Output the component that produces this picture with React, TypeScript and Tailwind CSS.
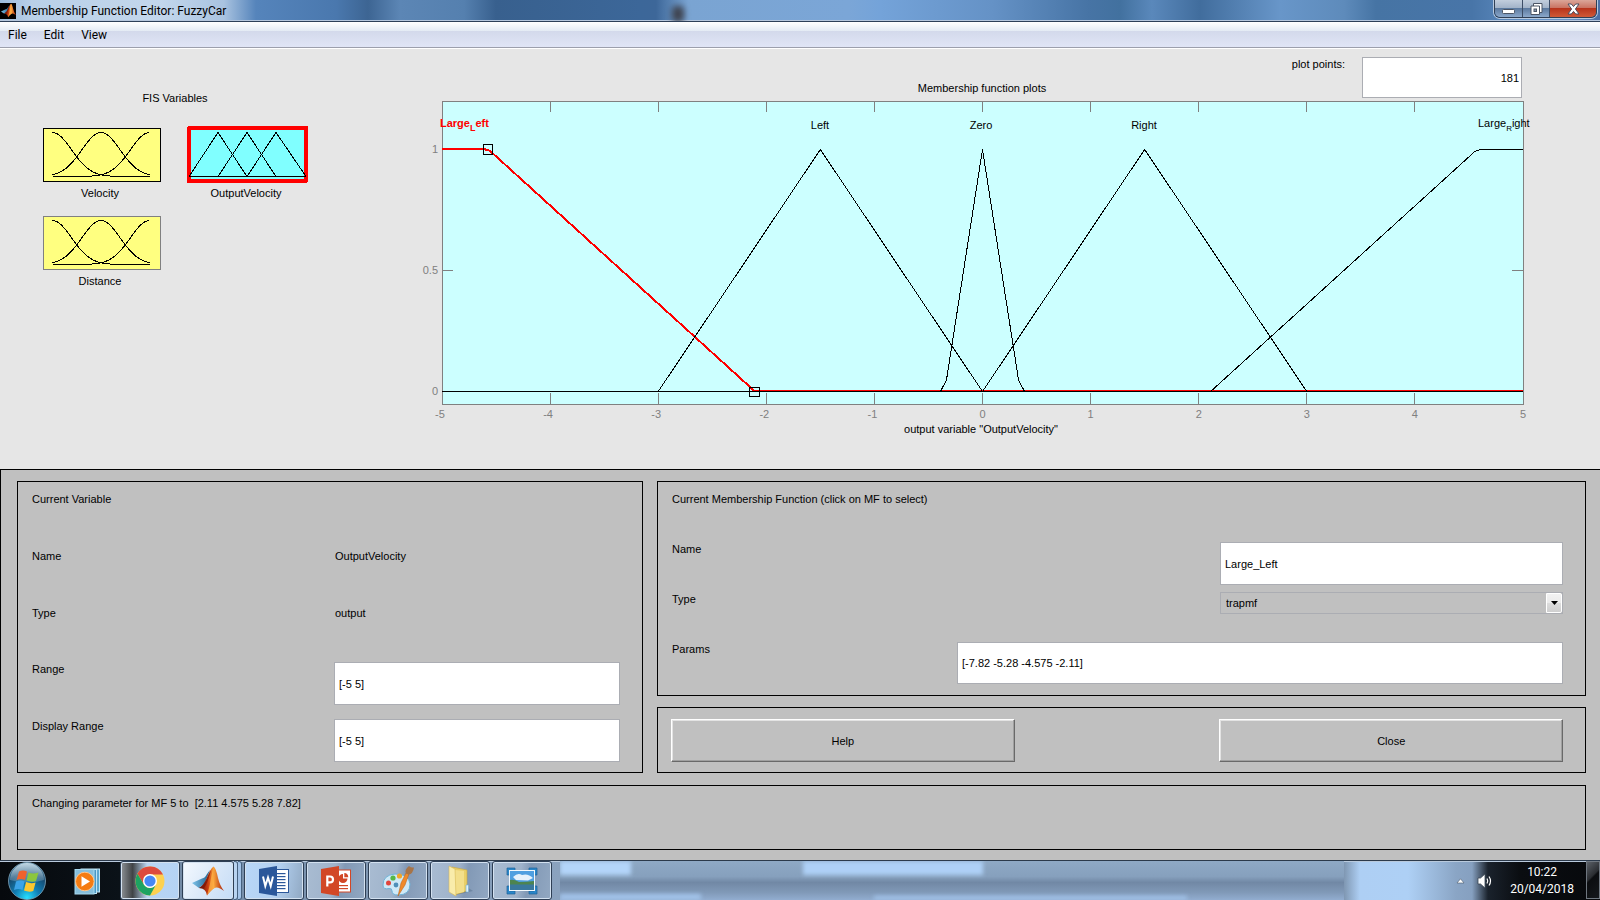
import React, { useId, useState } from "react";

type Point = [number, number];

const toPoints = (pts: Point[]) => pts.map(([x, y]) => `${x.toFixed(2)},${y.toFixed(2)}`).join(" ");

/* ---------- membership functions ---------- */

const trapmf = (x: number, a: number, b: number, c: number, d: number) => {
  if (x <= a || x >= d) return 0;
  if (x < b) return (x - a) / (b - a);
  if (x <= c) return 1;
  return (d - x) / (d - c);
};

const SAMPLES = 181;
const chartX = (v: number) => 982.5 + v * 108.1;
const chartY = (v: number) => 391.5 - v * 242;

const sampleMf = (a: number, b: number, c: number, d: number): Point[] =>
  Array.from({ length: SAMPLES }, (_, i) => {
    const v = -5 + (10 * i) / (SAMPLES - 1);
    return [chartX(v), chartY(trapmf(v, a, b, c, d))];
  });

const LARGE_LEFT = sampleMf(-7.82, -5.28, -4.575, -2.11).map(([x, y]): Point => [x, y - 0.5]);
const OTHERS = [
  sampleMf(-3, -1.5, -1.5, 0),
  sampleMf(-0.35, 0, 0, 0.35),
  sampleMf(0, 1.5, 1.5, 3),
  sampleMf(2.11, 4.575, 5.28, 7.82),
];

function MembershipChart() {
  const ticks = [-5, -4, -3, -2, -1, 0, 1, 2, 3, 4, 5];
  return (
    <svg viewBox="420 99 1124 341" className="block w-full overflow-visible text-[11px]" role="img" aria-label="Membership function plots">
      <rect x="442.5" y="101.5" width="1081" height="303" fill="#ccffff" stroke="#808080" shapeRendering="crispEdges" />
      <g stroke="#808080" shapeRendering="crispEdges">
        {ticks.slice(1, -1).map((t) => (
          <g key={t}>
            <line x1={Math.floor(chartX(t)) + 0.5} x2={Math.floor(chartX(t)) + 0.5} y1="102" y2="112" />
            <line x1={Math.floor(chartX(t)) + 0.5} x2={Math.floor(chartX(t)) + 0.5} y1="393" y2="404" />
          </g>
        ))}
        <line x1="443" x2="453" y1="270.5" y2="270.5" />
        <line x1="1512" x2="1523" y1="270.5" y2="270.5" />
      </g>
      <polyline points={toPoints(LARGE_LEFT)} fill="none" stroke="#ff0000" strokeWidth="2" shapeRendering="crispEdges" />
      <g fill="none" stroke="#000" shapeRendering="crispEdges">
        {OTHERS.map((pts, i) => (
          <polyline key={i} points={toPoints(pts)} />
        ))}
      </g>
      <g fill="none" stroke="#000" shapeRendering="crispEdges">
        <rect x="483.5" y="144.5" width="9" height="10" />
        <rect x="749.5" y="387.5" width="10" height="9" />
      </g>
      <g fill="#808080" textAnchor="middle">
        {ticks.map((t) => (
          <text key={t} x={chartX(t) - (t < 0 ? 2 : 0)} y="418">{t}</text>
        ))}
      </g>
      <g fill="#808080" textAnchor="end">
        <text x="438" y="153">1</text>
        <text x="438" y="274">0.5</text>
        <text x="438" y="395">0</text>
      </g>
      <g textAnchor="middle">
        <text x="820" y="129">Left</text>
        <text x="981" y="129">Zero</text>
        <text x="1144" y="129">Right</text>
        <text x="981" y="433">output variable "OutputVelocity"</text>
      </g>
      <text x="440" y="127" fill="#ff0000" fontWeight="bold">
        Large<tspan fontSize="9" dy="4">L</tspan><tspan dy="-4">eft</tspan>
      </text>
      <text x="1478" y="127">
        Large<tspan fontSize="8" dy="4">R</tspan><tspan dy="-4">ight</tspan>
      </text>
    </svg>
  );
}

/* ---------- FIS variable thumbnails ---------- */

const gauss = (center: number): Point[] =>
  Array.from({ length: 49 }, (_, i) => {
    const x = 9.5 + (97 * i) / 48;
    return [x, 48.5 - 44 * Math.exp(-((x - center) ** 2) / (2 * 19.1 ** 2))];
  });

function GaussThumb({ edge }: { edge: string }) {
  return (
    <svg width="118" height="54" viewBox="0 0 118 54" shapeRendering="crispEdges">
      <rect x="0.5" y="0.5" width="117" height="53" fill="#ffff80" stroke={edge} />
      {[9.5, 58, 106.5].map((c) => (
        <polyline key={c} points={toPoints(gauss(c))} fill="none" stroke="#000" />
      ))}
    </svg>
  );
}

function TriangleThumb() {
  return (
    <svg width="118" height="54" viewBox="0 0 118 54" shapeRendering="crispEdges" className="overflow-visible">
      <rect x="0" y="0" width="117" height="53" fill="#80ffff" stroke="#ff0000" strokeWidth="4" strokeLinejoin="round" />
      <g fill="none" stroke="#000">
        <polyline points="0,48.5 29,4.5 58,48.5" />
        <polyline points="29,48.5 58,4.5 87,48.5" />
        <polyline points="58,48.5 87,4.5 117,48.5" />
        <line x1="0" x2="117" y1="48.5" y2="48.5" />
      </g>
    </svg>
  );
}

function Variable({ name, children }: { name: string; children: React.ReactNode }) {
  return (
    <button type="button" className="flex flex-col items-center">
      {children}
      <span className="mt-[3px] pr-1 leading-4">{name}</span>
    </button>
  );
}

/* ---------- form parts ---------- */

const fieldClass = "w-full rounded-none border border-[#abadb3] bg-white px-1 text-black outline-none";

function Panel({ className = "", children }: { className?: string; children: React.ReactNode }) {
  return <section className={`border border-black ${className}`}>{children}</section>;
}

function Field({ label, value, rowClass, height }: { label: string; value: string; rowClass: string; height: string }) {
  const id = useId();
  const [text, setText] = useState(value);
  return (
    <div className={`grid items-start ${rowClass}`}>
      <label htmlFor={id} className="-mt-px leading-4">{label}</label>
      <input id={id} value={text} onChange={(e) => setText(e.target.value)} className={`${fieldClass} ${height}`} />
    </div>
  );
}

function PushButton({ children }: { children: React.ReactNode }) {
  return (
    <button type="button" className="h-[43px] border border-t-white border-r-[#696969] border-b-[#696969] border-l-white bg-[#c0c0c0] pt-px shadow-[inset_-1px_-1px_0_#a0a0a0,inset_1px_1px_0_#e3e3e3]">
      {children}
    </button>
  );
}

/* ---------- icons ---------- */

function MatlabLogo({ size }: { size: number }) {
  const id = useId();
  return (
    <svg width={size} height={size} viewBox="0 0 32 32">
      <defs>
        <linearGradient id={`${id}a`} x1="0" x2="1">
          <stop offset="0" stopColor="#7fc4ea" />
          <stop offset="1" stopColor="#1d5f8e" />
        </linearGradient>
        <linearGradient id={`${id}b`} x1="0" x2="1">
          <stop offset="0" stopColor="#5a1208" />
          <stop offset="0.35" stopColor="#c83b0e" />
          <stop offset="0.6" stopColor="#f7a13a" />
          <stop offset="1" stopColor="#a81c08" />
        </linearGradient>
      </defs>
      <path d="M0 18 L10 13.5 Q13 13 15 9 L18 5 L13 18 L7 23 Z" fill={`url(#${id}a)`} />
      <path d="M7 23 Q11 21 14 15 Q18 4 21.5 1.5 Q24 3 26 13 Q28 21 32 26 Q26 21 22.5 23 Q19 25 15 30.5 Q14 23 7 23 Z" fill={`url(#${id}b)`} />
      <path d="M21.5 1.5 Q19 12 18 19 Q16.5 25 15 30.5 Q19 25 22.5 23 Q21 10 21.5 1.5 Z" fill="#ffb347" opacity="0.75" />
      <path d="M7 23 Q11 21 14 15 L19 5 Q16 17 12 23.5 Z" fill="#7b1608" opacity="0.75" />
    </svg>
  );
}

function StartOrb() {
  return (
    <svg width="40" height="40" viewBox="0 0 40 40">
      <defs>
        <radialGradient id="orb" cx="0.5" cy="0.95" r="0.95">
          <stop offset="0" stopColor="#27e0ff" />
          <stop offset="0.35" stopColor="#117fb5" />
          <stop offset="0.7" stopColor="#164a70" />
          <stop offset="1" stopColor="#4d7f9f" />
        </radialGradient>
        <linearGradient id="orbGloss" x1="0" y1="0" x2="0" y2="1">
          <stop offset="0" stopColor="#e9f5fb" stopOpacity="0.75" />
          <stop offset="1" stopColor="#c6dce8" stopOpacity="0.2" />
        </linearGradient>
      </defs>
      <circle cx="20" cy="20" r="18.5" fill="url(#orb)" stroke="#8fb8cf" strokeOpacity="0.7" />
      <path d="M3 19 A17 17 0 0 1 37 19 Q20 24 3 19 Z" fill="url(#orbGloss)" />
      <path d="M12 10.5 Q16 8.5 20 10.5 L18 19 Q14 17 9.5 19 Z" fill="#f0622d" />
      <path d="M21.5 11.5 Q26 13.5 31.5 11.5 L29 20 Q25 21.5 19.5 19.5 Z" fill="#8cc63e" />
      <path d="M9 20.5 Q13.5 18.5 17.6 20.5 L15.5 29 Q11.5 27 7 29 Z" fill="#3ba3e8" />
      <path d="M19 21 Q24 23 28.6 21.5 L26.3 30 Q22 31.5 17 29.5 Z" fill="#fdc72f" />
    </svg>
  );
}

function MediaPlayerIcon() {
  return (
    <svg width="28" height="27" viewBox="0 0 28 27">
      <rect x="7" y="1" width="18.5" height="23" fill="#5ca7cf" stroke="#bfe4f5" />
      <rect x="4" y="1.5" width="18.5" height="24" fill="#4a98c4" stroke="#bfe4f5" />
      <rect x="1" y="1.5" width="19" height="24.5" fill="#86bfdc" stroke="#a8d9ef" />
      <circle cx="10.8" cy="13.5" r="9.3" fill="#f57c12" stroke="#ffc68c" />
      <path d="M7.5 8.3 L16 13.5 L7.5 18.7 Z" fill="#fff" />
    </svg>
  );
}

function ChromeIcon() {
  return (
    <svg width="30" height="30" viewBox="0 0 30 30">
      <circle cx="15" cy="15" r="14.5" fill="#fdd150" />
      <path d="M2.45 7.75 A14.5 14.5 0 0 1 28 8.6 L15 8.6 Q10 9 8.7 12 L8.9 18.5 Z" fill="#dd4b3e" />
      <path d="M2.45 7.75 L8.9 18.5 Q11.5 22.2 15.8 22 L20.5 19.5 L15 29.5 A14.5 14.5 0 0 1 2.45 7.75 Z" fill="#1da362" />
      <circle cx="15" cy="15" r="7" fill="#fff" />
      <circle cx="15" cy="15" r="5.6" fill="#4688f4" />
    </svg>
  );
}

function WordIcon() {
  return (
    <svg width="30" height="30" viewBox="0 0 30 30">
      <rect x="16" y="3.5" width="13.5" height="23" fill="#fff" stroke="#2b579a" />
      {[7, 10, 13, 16, 19, 22].map((y) => (
        <rect key={y} x="18" y={y} width="8.5" height="1.2" fill="#2b579a" />
      ))}
      <path d="M0 3 L18 0 V30 L0 27 Z" fill="#2b579a" />
      <path d="M4 10.5 L6.3 20 L9 11.5 L11.7 20 L14 10.5" fill="none" stroke="#fff" strokeWidth="2" />
    </svg>
  );
}

function PowerPointIcon() {
  return (
    <svg width="30" height="30" viewBox="0 0 30 30">
      <rect x="16" y="4" width="13.5" height="22" fill="#fff" stroke="#d24726" />
      <path d="M22 8 A4.5 4.5 0 1 0 26.5 12.5 H22 Z" fill="#d24726" />
      <path d="M23.3 7 A4.3 4.3 0 0 1 27.3 11.2 H23.3 Z" fill="#d24726" />
      <rect x="18" y="19" width="9" height="1.2" fill="#d24726" />
      <rect x="18" y="22" width="9" height="1.2" fill="#d24726" />
      <path d="M0 3 L18 0 V30 L0 27 Z" fill="#d24726" />
      <path d="M6.3 20.5 V10.5 H9 Q12 10.5 12 13.4 Q12 16.4 9 16.4 H6.3" fill="none" stroke="#fff" strokeWidth="2.2" />
    </svg>
  );
}

function PaintIcon() {
  return (
    <svg width="34" height="32" viewBox="0 0 34 32">
      <path d="M2 20 Q2 10 14 9 Q28 9 29 19 Q29 30 17 30 Q11 30 11 26 Q11 23 8 23.5 Q2 25 2 20 Z" fill="#cfe9f7" stroke="#6fb3d8" />
      <circle cx="7.5" cy="18" r="2.5" fill="#e2453c" />
      <circle cx="12" cy="13" r="2.6" fill="#56b847" />
      <circle cx="18.5" cy="11" r="2.6" fill="#f2a62a" />
      <circle cx="15" cy="20" r="2.4" fill="#4f8fb8" />
      <path d="M17 31 L20 18 L25 8 L28 9 L24 20 Z" fill="#ef8a2b" stroke="#b85f14" strokeWidth="0.5" />
      <path d="M25 8.5 Q23 5 28 1 Q30 3 33 2.5 Q32 9 27.5 9.5 Z" fill="#a77448" />
    </svg>
  );
}

function FolderIcon() {
  return (
    <svg width="28" height="32" viewBox="0 0 28 32">
      <path d="M10 30 L27 26 L21 22 Z" fill="#3d566f" opacity="0.3" />
      <path d="M6 2 L21 5 V26 L8 30 Z" fill="#e9cf68" stroke="#c8a53f" strokeWidth="0.6" />
      <path d="M9 5 L18 6 V27 L9 29 Z" fill="#f3df8b" />
      <path d="M3 1 L9 4 L10 31 L3 27 Z" fill="#f9ecab" stroke="#d8bb58" strokeWidth="0.6" />
      <path d="M20 20 H22.5 V27 H20 Z" fill="#dff1fb" stroke="#74aed3" strokeWidth="0.6" />
    </svg>
  );
}

function PictureIcon() {
  return (
    <svg width="32" height="28" viewBox="0 0 32 28">
      <path d="M1 8 V1 H9 V4 H4 V8 Z M23 1 H31 V8 H28 V4 H23 Z M1 19 V27 H9 V24 H4 V19 Z M31 19 V27 H23 V24 H28 V19 Z" fill="#2b86c8" stroke="#1d6299" strokeWidth="0.7" />
      <rect x="3.5" y="3.5" width="25" height="20" fill="#4f9fe0" stroke="#f2f8fc" />
      <path d="M7 10 Q12 5 16 8 Q22 6 27 11 L22 13.5 L10 13 Z" fill="#fff" opacity="0.85" />
      <path d="M4 13 Q8 12 13 15 Q20 15 28 14 V18 H4 Z" fill="#4d8450" />
      <rect x="4" y="17.5" width="24" height="5.5" fill="#3a789d" />
    </svg>
  );
}

/* ---------- window chrome ---------- */

function TitleBar() {
  return (
    <header className="relative flex h-[22px] items-start justify-between overflow-hidden border-b border-[#2d3f58] bg-[linear-gradient(90deg,#9cbcdc_0%,#b9d0e8_2%,#c3d7ec_10%,#a9c3e0_14%,#5584bb_16%,#4a78ae_21%,#3d6593_23%,#5c86b5_25%,#5580af_29%,#38608e_31%,#3c6799_40%,#3d6799_41%,#7aa4d2_43%,#7ba6d7_53%,#74a3d9_55%,#6592c6_62%,#4774a5_68%,#42719f_70%,#5a88bb_72%,#416d9d_75%,#6896c9_80%,#5e8bbb_84%,#4674a4_86%,#4875a8_92%,#6593c8_96%,#6793c8_98%,#4b6fa5_100%)] shadow-[inset_0_-1px_0_#b5c6dc]">
      <div className="flex h-full items-center gap-[5px]">
        <span className="flex size-4 items-center justify-center bg-black"><MatlabLogo size={15} /></span>
        <h1 className="font-['Roboto',sans-serif] text-[12px] leading-5 text-black">Membership Function Editor: FuzzyCar</h1>
      </div>
      <span aria-hidden="true" className="absolute top-1.5 left-[42%] h-4 w-3 rounded bg-[#3f4450] blur-[3px]" />
      <div className="absolute top-0 right-[3px] flex h-[18px] overflow-hidden rounded-b-md border border-t-0 border-[#2f3f55] shadow-[0_0_0_1px_#b8cae0]">
        <button type="button" aria-label="Minimize" className="flex w-[28px] items-center justify-center border-r border-[#3c4d66] bg-[linear-gradient(#c2cedd_0%,#a3b4c9_45%,#5c7a9f_50%,#8ba8cb_100%)]">
          <svg width="13" height="16" viewBox="0 0 13 16"><rect x="0.5" y="8.5" width="12" height="4" rx="1" fill="#fff" stroke="#4b5565" /></svg>
        </button>
        <button type="button" aria-label="Restore" className="flex w-[27px] items-center justify-center border-r border-[#3c4d66] bg-[linear-gradient(#c2cedd_0%,#a3b4c9_45%,#5c7a9f_50%,#8ba8cb_100%)]">
          <svg width="13" height="14" viewBox="0 0 13 14" fill="#fff" stroke="#4b5565">
            <path d="M3.5 1.5 H12 V10.5 H3.5 Z" />
            <path d="M1 4 H9.5 V12.5 H1 Z" />
            <rect x="4" y="7" width="2.5" height="2.5" fill="#8c9cb0" />
          </svg>
        </button>
        <button type="button" aria-label="Close window" className="flex w-[46px] items-center justify-center bg-[linear-gradient(#dba699_0%,#ca7463_45%,#b8341c_50%,#cf5a38_100%)]">
          <svg width="13" height="12" viewBox="0 0 13 12"><path d="M1 1 H4.3 L6.5 3.6 L8.7 1 H12 L8.4 6 L12 11 H8.7 L6.5 8.4 L4.3 11 H1 L4.6 6 Z" fill="#fff" stroke="#4b4f60" /></svg>
        </button>
      </div>
    </header>
  );
}

function MenuBar() {
  return (
    <nav className="flex h-[27px] items-center gap-[17px] border-b border-white bg-[linear-gradient(#ffffff_0px,#e3eaf4_9px,#d3d9eb_9px,#e0e5f6_25px,#9c9fac_25px,#9c9fac_26px)] px-2 font-['Roboto',sans-serif] text-[12px] leading-4">
      {["File", "Edit", "View"].map((m) => (
        <button type="button" key={m}>{m}</button>
      ))}
    </nav>
  );
}

/* ---------- taskbar ---------- */

function TaskButton({ label, tone, width = "w-[60px]", children }: { label: string; tone: string; width?: string; children: React.ReactNode }) {
  return (
    <button type="button" aria-label={label} className={`flex h-[39px] ${width} items-center justify-center rounded-[3px] border border-[#2e3f55] shadow-[inset_0_0_0_1px_#d3e1f0] ${tone}`}>
      {children}
    </button>
  );
}

const GLASS = "bg-[linear-gradient(100deg,#a9bcd2_0%,#9fb3cb_45%,#8299b6_60%,#92a8c2_100%)]";

function Taskbar() {
  return (
    <footer className="relative flex h-10 shrink-0 items-start overflow-hidden border-t border-[#2c3a4b] bg-[linear-gradient(90deg,#06090d_0px,#0b1218_120px,#7088a4_130px,#8aa2be_35%,#89a1bb_60%,#7f97b2_84%,#aecff4_85%,#aed0f5_88%,#8aa5c5_91%,#86a0c0_92%,#1a222c_93%,#0a0d11_95%,#07090c_100%)] shadow-[inset_0_1px_0_#b9cadd]">
      <div aria-hidden="true" className="absolute inset-y-0 right-[16%] left-[35%] overflow-hidden">
        <div className="h-full bg-[linear-gradient(#8fa9c5_0%,#86a0bd_40%,#7188a5_55%,#8099b7_80%,#92add0_100%)]" />
        <span className="absolute top-0 left-0 h-3.5 w-[9%] bg-[#b3d5f9] blur-[2px]" />
        <span className="absolute top-0 left-[31%] h-3.5 w-[23%] bg-[#aed0f6] blur-[2px]" />
        <span className="absolute bottom-0 left-0 h-1.5 w-[18%] bg-[#a2c3ea] blur-[2px]" />
        <span className="absolute bottom-0 left-[40%] h-1 w-[40%] bg-[#a2c3ea] blur-[2px]" />
      </div>
      <nav aria-label="Taskbar" className="relative flex items-start gap-[2px]">
        <button type="button" aria-label="Start" className="ml-[7px]"><StartOrb /></button>
        <button type="button" aria-label="Media Player" className="mt-[7px] mr-4 ml-[25px]"><MediaPlayerIcon /></button>
        <TaskButton label="Chrome" tone="bg-[linear-gradient(90deg,#8d9196_0%,#404346_20%,#b9d5f3_45%,#b5d3f5_100%)]"><ChromeIcon /></TaskButton>
        <div className="flex">
          <TaskButton label="MATLAB" width="w-[52px]" tone="bg-[linear-gradient(120deg,#f4f9ff,#dbe9f9_50%,#c5dcf6)]"><MatlabLogo size={32} /></TaskButton>
          <span className="h-[39px] w-1 rounded-r-[3px] border border-l-0 border-[#46617f] bg-[#b8d3f0]" />
          <span className="h-[39px] w-1 rounded-r-[3px] border border-l-0 border-[#46617f] bg-[#a4c4e8]" />
        </div>
        <TaskButton label="Word" tone="bg-[linear-gradient(100deg,#b9d7f8_0%,#b3d0f0_55%,#90a8c2_100%)]"><WordIcon /></TaskButton>
        <TaskButton label="PowerPoint" tone={GLASS}><PowerPointIcon /></TaskButton>
        <TaskButton label="Paint" tone={GLASS}><PaintIcon /></TaskButton>
        <TaskButton label="Explorer" tone={GLASS}><FolderIcon /></TaskButton>
        <TaskButton label="Pictures" tone={GLASS}><PictureIcon /></TaskButton>
      </nav>
      <div className="relative ml-auto flex h-full items-center">
        <button type="button" aria-label="Show hidden icons" className="mr-3">
          <svg width="9" height="6" viewBox="0 0 9 6"><path d="M4.5 0.8 L8 5 H1 Z" fill="#fff" stroke="#4b5a6c" strokeWidth="0.6" /></svg>
        </button>
        <button type="button" aria-label="Volume" className="mr-[17px]">
          <svg width="16" height="16" viewBox="0 0 16 16">
            <path d="M1 5 H3.5 L8 1 V15 L3.5 11 H1 Z" fill="#fff" stroke="#3b4654" strokeWidth="0.8" />
            <path d="M10 5.5 Q11.5 8 10 10.5 M12 3.5 Q15 8 12 12.5" fill="none" stroke="#fff" strokeWidth="1.2" />
          </svg>
        </button>
        <time className="mr-3 text-center font-['Roboto',sans-serif] text-[12px] leading-[17px] text-white">
          10:22<br />20/04/2018
        </time>
        <button type="button" aria-label="Show desktop" className="h-[38px] w-[14px] self-start border border-[#6f7780] bg-[linear-gradient(135deg,#5b6067_0%,#2a2d31_40%,#0b0d10_45%,#15181c_100%)]" />
      </div>
    </footer>
  );
}

/* ---------- page ---------- */

export default function App() {
  const [points, setPoints] = useState("181");
  return (
    <div className="flex min-h-screen flex-col bg-[#e6e6e6] font-['Liberation_Sans',sans-serif] text-[11px] text-black">
      <TitleBar />
      <MenuBar />

      <main className="flex flex-1 flex-col">
        <div className="flex min-h-[420px] flex-1 items-start">
          <aside className="w-[420px] shrink-0 pt-[41px] pl-[43px]">
            <div className="w-[264px]">
              <h2 className="mb-[22px] text-center leading-4">FIS Variables</h2>
              <div className="grid grid-cols-[118px_118px] gap-x-7 gap-y-[15px]">
                <Variable name="Velocity"><GaussThumb edge="#000" /></Variable>
                <Variable name="OutputVelocity"><TriangleThumb /></Variable>
                <Variable name="Distance"><GaussThumb edge="#808080" /></Variable>
              </div>
            </div>
          </aside>

          <section className="min-w-0 flex-1 pt-2 pr-[56px]">
            <div className="grid h-[42px] grid-cols-[1fr_auto_1fr]">
              <span />
              <h2 className="mt-[23px] leading-4">Membership function plots</h2>
              <div className="flex justify-end gap-[17px] pr-[22px]">
                <label htmlFor="plot-points" className="-mt-px leading-4">plot points:</label>
                <div className="w-40">
                  <input id="plot-points" value={points} onChange={(e) => setPoints(e.target.value)} className="h-[41px] w-full border border-[#abadb3] bg-white px-[2px] text-right outline-none" />
                </div>
              </div>
            </div>
            <MembershipChart />
          </section>
        </div>

        <div className="flex flex-col gap-3 border-t border-l border-black bg-[#c0c0c0] pt-[11px] pr-[14px] pb-[10px] pl-4">
          <div className="grid grid-cols-[626fr_929fr] gap-[14px]">
            <Panel className="flex flex-col pt-[9px] pr-[22px] pb-[10px] pl-[14px]">
              <h2 className="h-[57px] leading-4">Current Variable</h2>
              <dl>
                <div className="grid h-[57px] grid-cols-[302fr_286fr] leading-4">
                  <dt>Name</dt>
                  <dd className="pl-px">OutputVelocity</dd>
                </div>
                <div className="grid h-[57px] grid-cols-[302fr_286fr] leading-4">
                  <dt>Type</dt>
                  <dd className="pl-px">output</dd>
                </div>
              </dl>
              <Field label="Range" value="[-5 5]" rowClass="h-[57px] grid-cols-[302fr_286fr]" height="h-[43px]" />
              <Field label="Display Range" value="[-5 5]" rowClass="grid-cols-[302fr_286fr]" height="h-[43px]" />
            </Panel>

            <div className="flex flex-col gap-[11px]">
              <Panel className="pt-[9px] pr-[22px] pb-[11px] pl-[14px]">
                <h2 className="h-[51px] leading-4">Current Membership Function (click on MF to select)</h2>
                <Field label="Name" value="Large_Left" rowClass="h-[50px] grid-cols-[548fr_343fr]" height="h-[43px]" />
                <div className="grid h-[50px] grid-cols-[548fr_343fr] items-start">
                  <label htmlFor="mf-type" className="-mt-px leading-4">Type</label>
                  <div className="relative">
                    <select id="mf-type" defaultValue="trapmf" className="h-[22px] w-full appearance-none rounded-none border border-[#abadb3] bg-[#c0c0c0] px-[5px] text-[11px] outline-none">
                      <option>trapmf</option>
                      <option>trimf</option>
                      <option>gaussmf</option>
                    </select>
                    <span className="pointer-events-none absolute top-px right-px flex h-5 w-4 items-center justify-center rounded-r-[2px] border border-white bg-[linear-gradient(#f2f2f2,#ebebeb_50%,#dddddd_50%,#cfcfcf)]">
                      <svg width="7" height="4" viewBox="0 0 7 4"><path d="M0 0 H7 L3.5 4 Z" /></svg>
                    </span>
                  </div>
                </div>
                <Field label="Params" value="[-7.82 -5.28 -4.575 -2.11]" rowClass="grid-cols-[285fr_606fr]" height="h-[42px]" />
              </Panel>
              <Panel className="grid grid-cols-[344fr_205fr_344fr] pt-[11px] pr-[22px] pb-[10px] pl-[13px]">
                <PushButton>Help</PushButton>
                <span />
                <PushButton>Close</PushButton>
              </Panel>
            </div>
          </div>
          <Panel className="h-[65px] px-[14px] pt-[9px]">
            <p className="leading-4 whitespace-pre">Changing parameter for MF 5 to  [2.11 4.575 5.28 7.82]</p>
          </Panel>
        </div>
      </main>

      <Taskbar />
    </div>
  );
}
